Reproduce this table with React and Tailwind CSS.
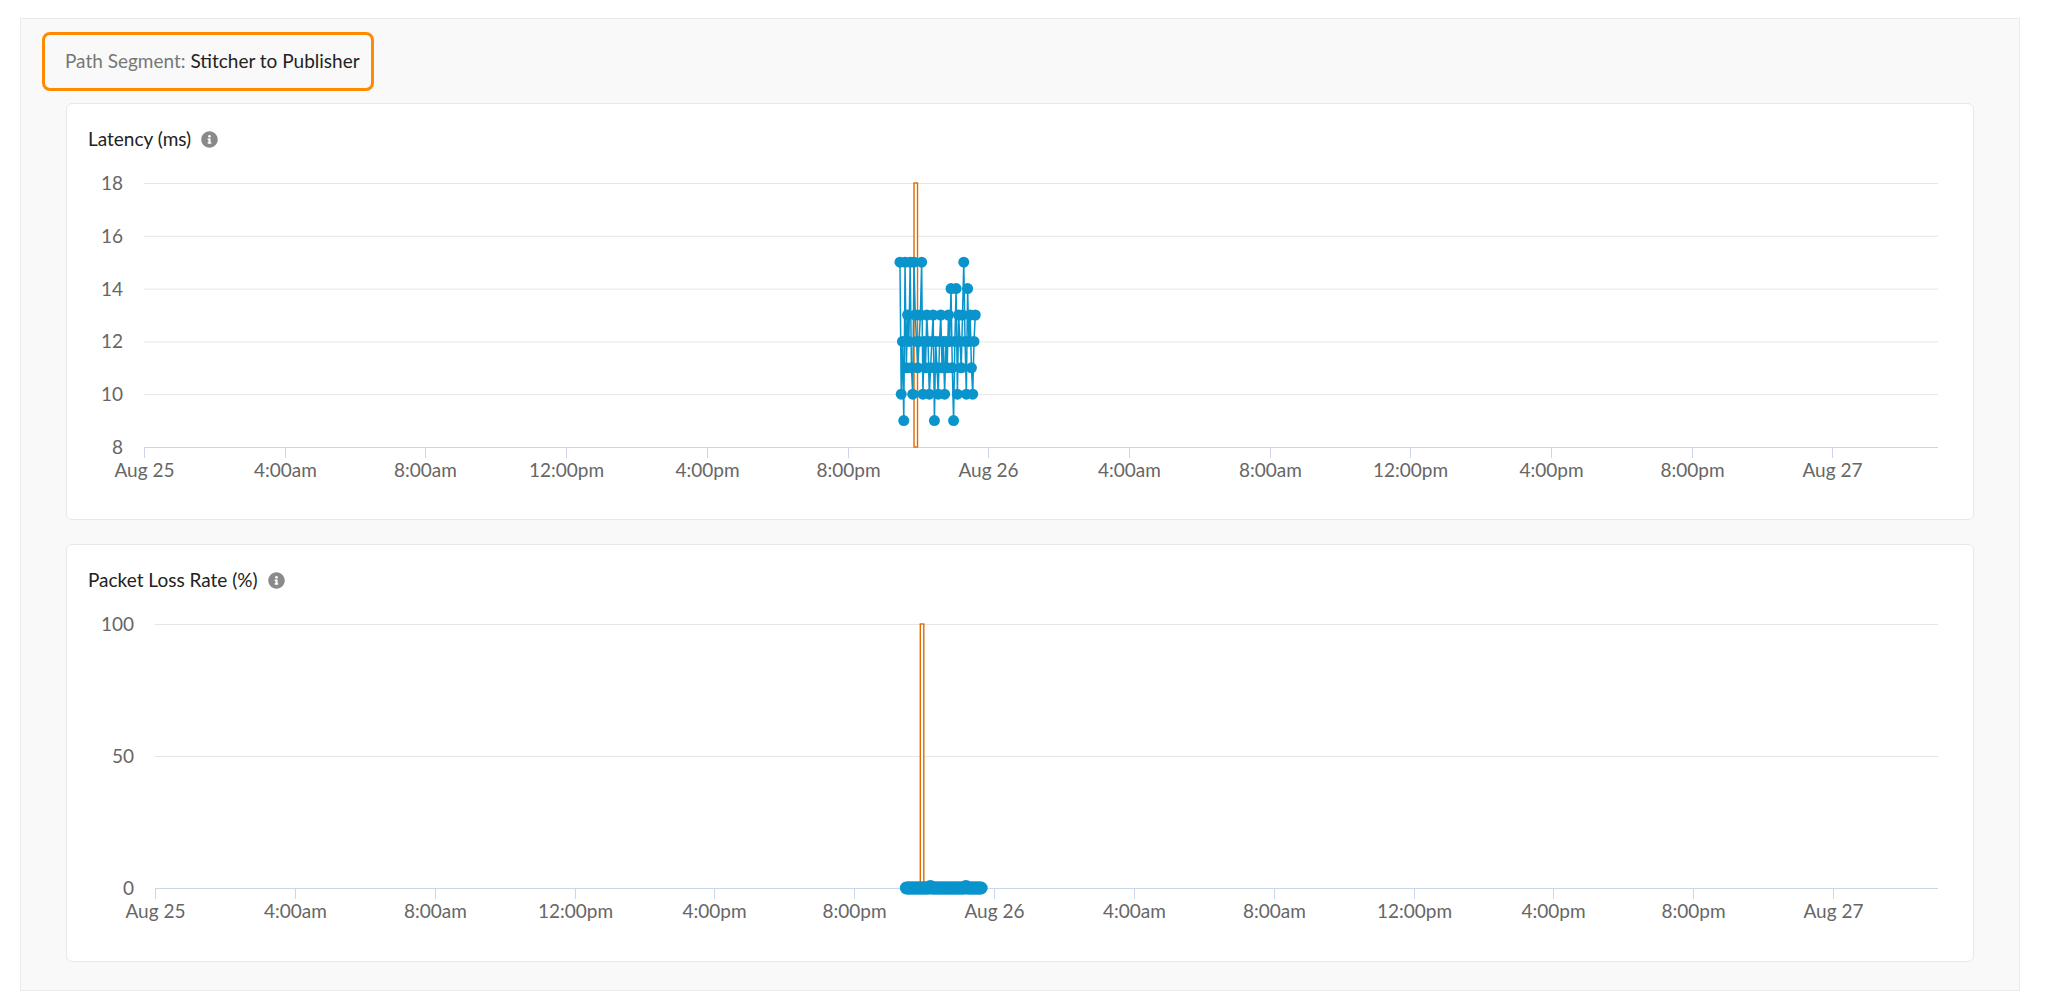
import { FaInfoCircle } from 'react-icons/fa';

const FONT = { fontFamily: 'Lato, "Open Sans", sans-serif' };

const X_LABELS = [
  'Aug 25', '4:00am', '8:00am', '12:00pm', '4:00pm', '8:00pm',
  'Aug 26', '4:00am', '8:00am', '12:00pm', '4:00pm', '8:00pm', 'Aug 27',
];

// latency samples, roughly every two minutes from ~9:30pm to ~11:35pm
const LATENCY = [
  15, 10, 12, 9, 15, 11, 13, 12, 15, 11, 10, 15, 13, 12, 11, 12, 13, 15, 10, 12,
  11, 13, 12, 10, 11, 12, 13, 9, 12, 11, 10, 12, 13, 11, 12, 10, 12, 11, 13, 12,
  14, 11, 9, 12, 14, 10, 13, 12, 11, 13, 15, 12, 10, 14, 12, 13, 11, 10, 12, 13,
];
const LOSS = LATENCY.map((_, i) => (i === 19 || i === 47 ? 0.6 : 0));

const START = 21.49;
const STEP = 0.0363;
const EVENT = 21.94;
const HOURS = 51;

const PLOT_TOP = 33;
const PLOT_BOTTOM = 297;
const PLOT_RIGHT = 1871;

function Chart({ plotLeft, labelRight, min, max, ticks, values, radius }) {
  const xOf = (t) => plotLeft + (t * (PLOT_RIGHT - plotLeft)) / HOURS;
  const yOf = (v) => PLOT_BOTTOM - ((v - min) / (max - min)) * (PLOT_BOTTOM - PLOT_TOP);
  const points = values.map((v, i) => [xOf(START + i * STEP), yOf(v)]);
  const ex = xOf(EVENT);

  return (
    <svg width="1906" height="370" className="block" style={FONT}>
      {ticks.map((v) => (
        <g key={v}>
          {v !== min && (
            <line x1={plotLeft} x2={PLOT_RIGHT} y1={yOf(v) + 0.5} y2={yOf(v) + 0.5} stroke="#e6e6e6" strokeWidth="1" />
          )}
          <text x={labelRight} y={yOf(v) + 7} textAnchor="end" fontSize="19" fill="#666666">
            {v}
          </text>
        </g>
      ))}
      <line x1={plotLeft} x2={PLOT_RIGHT} y1={PLOT_BOTTOM + 0.5} y2={PLOT_BOTTOM + 0.5} stroke="#ccd6eb" strokeWidth="1" />
      {X_LABELS.map((label, i) => {
        const x = Math.round(xOf(i * 4)) + 0.5;
        return (
          <g key={i}>
            <line x1={x} x2={x} y1={PLOT_BOTTOM} y2={PLOT_BOTTOM + 11} stroke="#ccd6eb" strokeWidth="1" />
            <text x={x} y={327} textAnchor="middle" fontSize="19" fill="#666666">
              {label}
            </text>
          </g>
        );
      })}
      <rect x={ex - 1.75} y={PLOT_TOP} width="3.5" height={PLOT_BOTTOM - PLOT_TOP} fill="#ffffff" stroke="#e06a00" strokeWidth="1.4" />
      <polyline
        points={points.map((p) => p.join(',')).join(' ')}
        fill="none"
        stroke="#0994cc"
        strokeWidth="1.5"
        strokeLinejoin="round"
      />
      {points.map(([x, y], i) => (
        <circle key={i} cx={x} cy={y} r={radius} fill="#0994cc" />
      ))}
    </svg>
  );
}

function ChartCard({ title, className, children }) {
  return (
    <div className={`w-[1908px] rounded-[6px] border border-[#e8e8e8] bg-white ${className}`}>
      <div className="ml-[21px] mt-[24px] flex h-[22px] items-center gap-[10px]">
        <span className="text-[19px] leading-[22px] text-[#222222]">{title}</span>
        <FaInfoCircle className="h-[17px] w-[17px] text-[#8a8a8a]" />
      </div>
      {children}
    </div>
  );
}

export default function App() {
  return (
    <div className="min-h-screen bg-white pl-[20px] pt-[18px]" style={FONT}>
      <div className="flex h-[973px] w-[2000px] flex-col border border-[#ebebeb] bg-[#f9f9f9]">
        <div className="ml-[21px] mt-[13px] flex h-[59px] w-[332px] items-center rounded-[8px] border-[3px] border-[#ff8a00] pl-[20px]">
          <span className="whitespace-nowrap text-[19px] text-[#777777]">
            Path Segment: <span className="text-[#222222]">Stitcher to Publisher</span>
          </span>
        </div>

        <ChartCard title="Latency (ms)" className="ml-[45px] mt-[12px] h-[417px]">
          <Chart
            plotLeft={77}
            labelRight={56}
            min={8}
            max={18}
            ticks={[8, 10, 12, 14, 16, 18]}
            values={LATENCY}
            radius={5.5}
          />
        </ChartCard>

        <ChartCard title="Packet Loss Rate (%)" className="ml-[45px] mt-[24px] h-[418px]">
          <Chart
            plotLeft={88}
            labelRight={67}
            min={0}
            max={100}
            ticks={[0, 50, 100]}
            values={LOSS}
            radius={6.5}
          />
        </ChartCard>
      </div>
    </div>
  );
}
